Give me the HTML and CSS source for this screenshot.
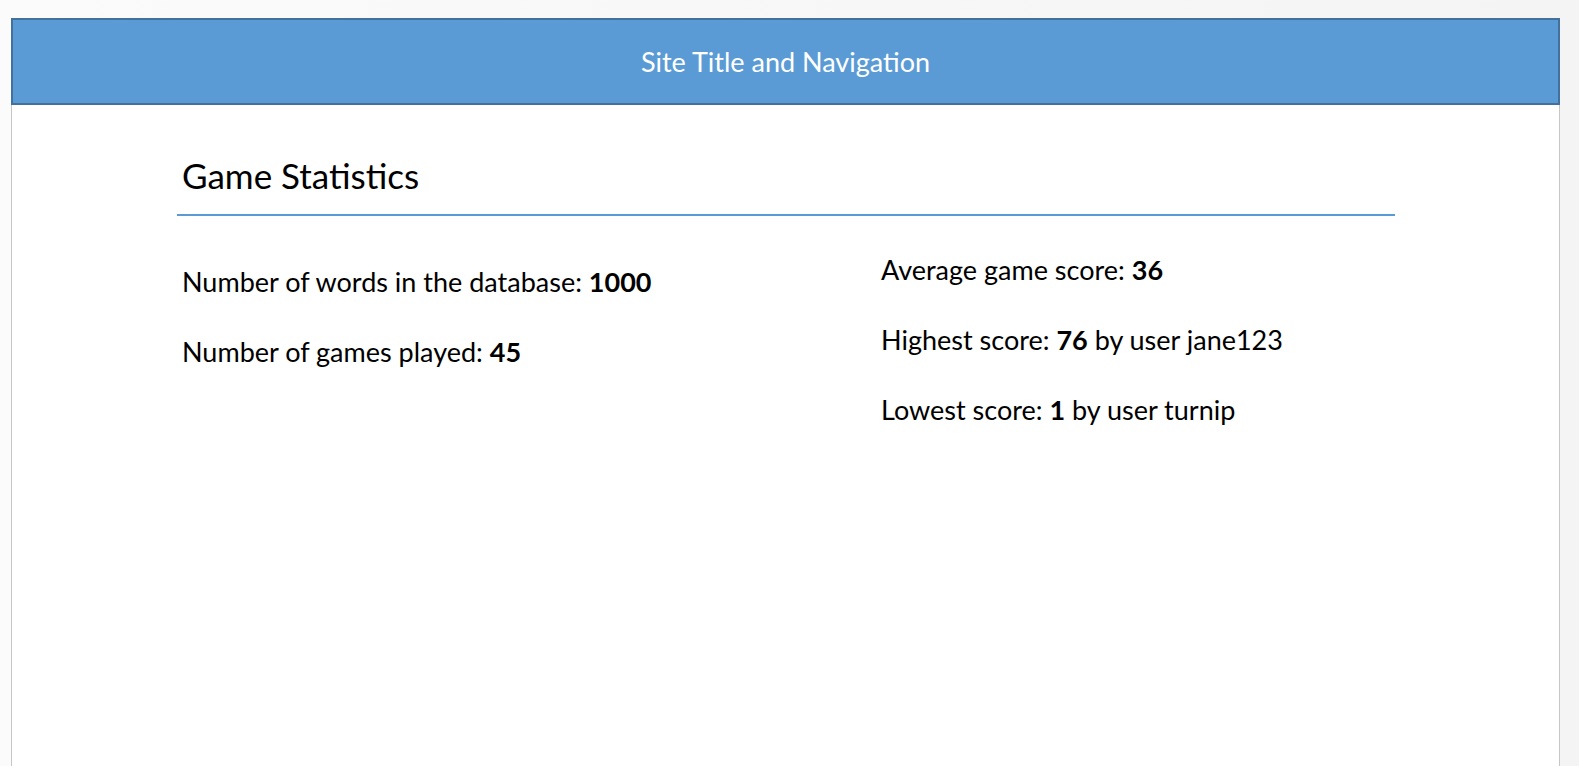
FILE: index.html
```html
<!DOCTYPE html>
<html>
<head>
<meta charset="utf-8">
<link rel="stylesheet" href="styles.css">
</head>
<body>
<div class="frame">
  <header class="site-header">Site Title and Navigation</header>
  <main class="content">
    <h1 class="title">Game Statistics</h1>
    <div class="stats">
      <div class="col col-left">
        <p class="stat">Number of words in the database: <b>1000</b></p>
        <p class="stat">Number of games played: <b>45</b></p>
      </div>
      <div class="col col-right">
        <p class="stat">Average game score: <b>36</b></p>
        <p class="stat">Highest score: <b>76</b> by user jane123</p>
        <p class="stat">Lowest score: <b>1</b> by user turnip</p>
      </div>
    </div>
  </main>
</div>
</body>
</html>
```
FILE: styles.css
```css
html, body {
  margin: 0;
  height: 100%;
}
body {
  background: linear-gradient(to right, #fbfbfb 0, #fbfbfb 11px, #f4f4f4 1560px);
  font-family: "Lato", "Open Sans", sans-serif;
  color: #000;
  overflow: hidden;
}
.frame {
  margin: 18px 0 0 11px;
  width: 1549px;
  height: calc(100% - 18px);
  background: #fff;
  border-left: 1px solid #c6c6c6;
  border-right: 1px solid #c6c6c6;
  box-sizing: border-box;
}
.site-header {
  height: 87px;
  margin-left: -1px;
  margin-right: -1px;
  background: #5b9bd5;
  border: 2px solid #41719c;
  box-sizing: border-box;
  color: #fff;
  font-size: 27px;
  display: flex;
  align-items: center;
  justify-content: center;
}
.content {
  padding-left: 165px;
  width: 1383px;
  box-sizing: border-box;
}
.title {
  margin: 0;
  padding: 50px 0 19px 5px;
  font-weight: normal;
  font-size: 35px;
  line-height: 40px;
  border-bottom: 2px solid #5b9bd5;
}
.stats {
  display: grid;
  grid-template-columns: 699px 1fr;
  padding-left: 5px;
}
.stat {
  margin: 0;
  font-size: 27px;
  line-height: 32px;
}
.col-left { padding-top: 50px; display: flex; flex-direction: column; gap: 38px; }
.col-right { padding-top: 38px; display: flex; flex-direction: column; gap: 38px; }
b { font-weight: bold; }
```
